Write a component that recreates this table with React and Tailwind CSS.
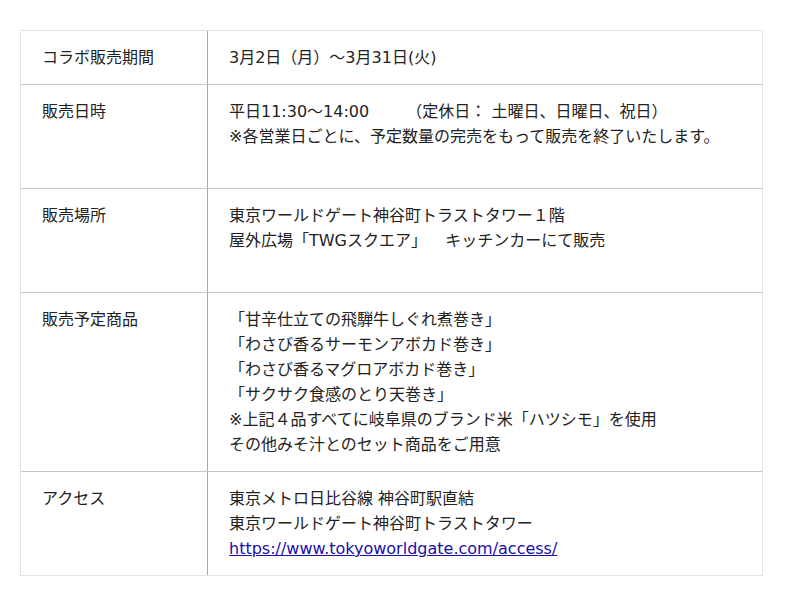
const rows = [
  { label: "コラボ販売期間", lines: ["3月2日（月）～3月31日(火)"] },
  {
    label: "販売日時",
    lines: [
      "平日11:30～14:00　　 （定休日： 土曜日、日曜日、祝日）",
      "※各営業日ごとに、予定数量の完売をもって販売を終了いたします。",
      "",
    ],
  },
  {
    label: "販売場所",
    lines: ["東京ワールドゲート神谷町トラストタワー１階", "屋外広場「TWGスクエア」　  キッチンカーにて販売", ""],
  },
  {
    label: "販売予定商品",
    lines: [
      "「甘辛仕立ての飛騨牛しぐれ煮巻き」",
      "「わさび香るサーモンアボカド巻き」",
      "「わさび香るマグロアボカド巻き」",
      "「サクサク食感のとり天巻き」",
      "※上記４品すべてに岐阜県のブランド米「ハツシモ」を使用",
      "その他みそ汁とのセット商品をご用意",
    ],
  },
  {
    label: "アクセス",
    lines: ["東京メトロ日比谷線 神谷町駅直結", "東京ワールドゲート神谷町トラストタワー"],
    link: "https://www.tokyoworldgate.com/access/",
  },
];

const App = () => {
  return (
    <div
      className="min-h-screen bg-white pt-[30px] pl-[20px] text-[16px] leading-[25px] text-[#222]"
      style={{ fontFamily: '"DejaVu Sans", "Noto Sans CJK JP", sans-serif' }}
    >
      <div className="w-[743px] border border-[#e2e2e2]">
        {rows.map((row, i) => (
          <div
            key={row.label}
            className={`grid grid-cols-[187px_1fr] ${i > 0 ? "border-t border-[#c6c6c6]" : ""}`}
          >
            <div className="border-r border-[#a8a8a8] py-[14px] pl-[21px]">{row.label}</div>
            <div className="py-[14px] pl-[21px]">
              {row.lines.map((line, j) => (
                <div key={j} className="h-[25px] whitespace-pre">
                  {line}
                </div>
              ))}
              {row.link && (
                <a href={row.link} className="text-[#1a0dab] underline">
                  {row.link}
                </a>
              )}
            </div>
          </div>
        ))}
      </div>
    </div>
  );
};

export default App;
